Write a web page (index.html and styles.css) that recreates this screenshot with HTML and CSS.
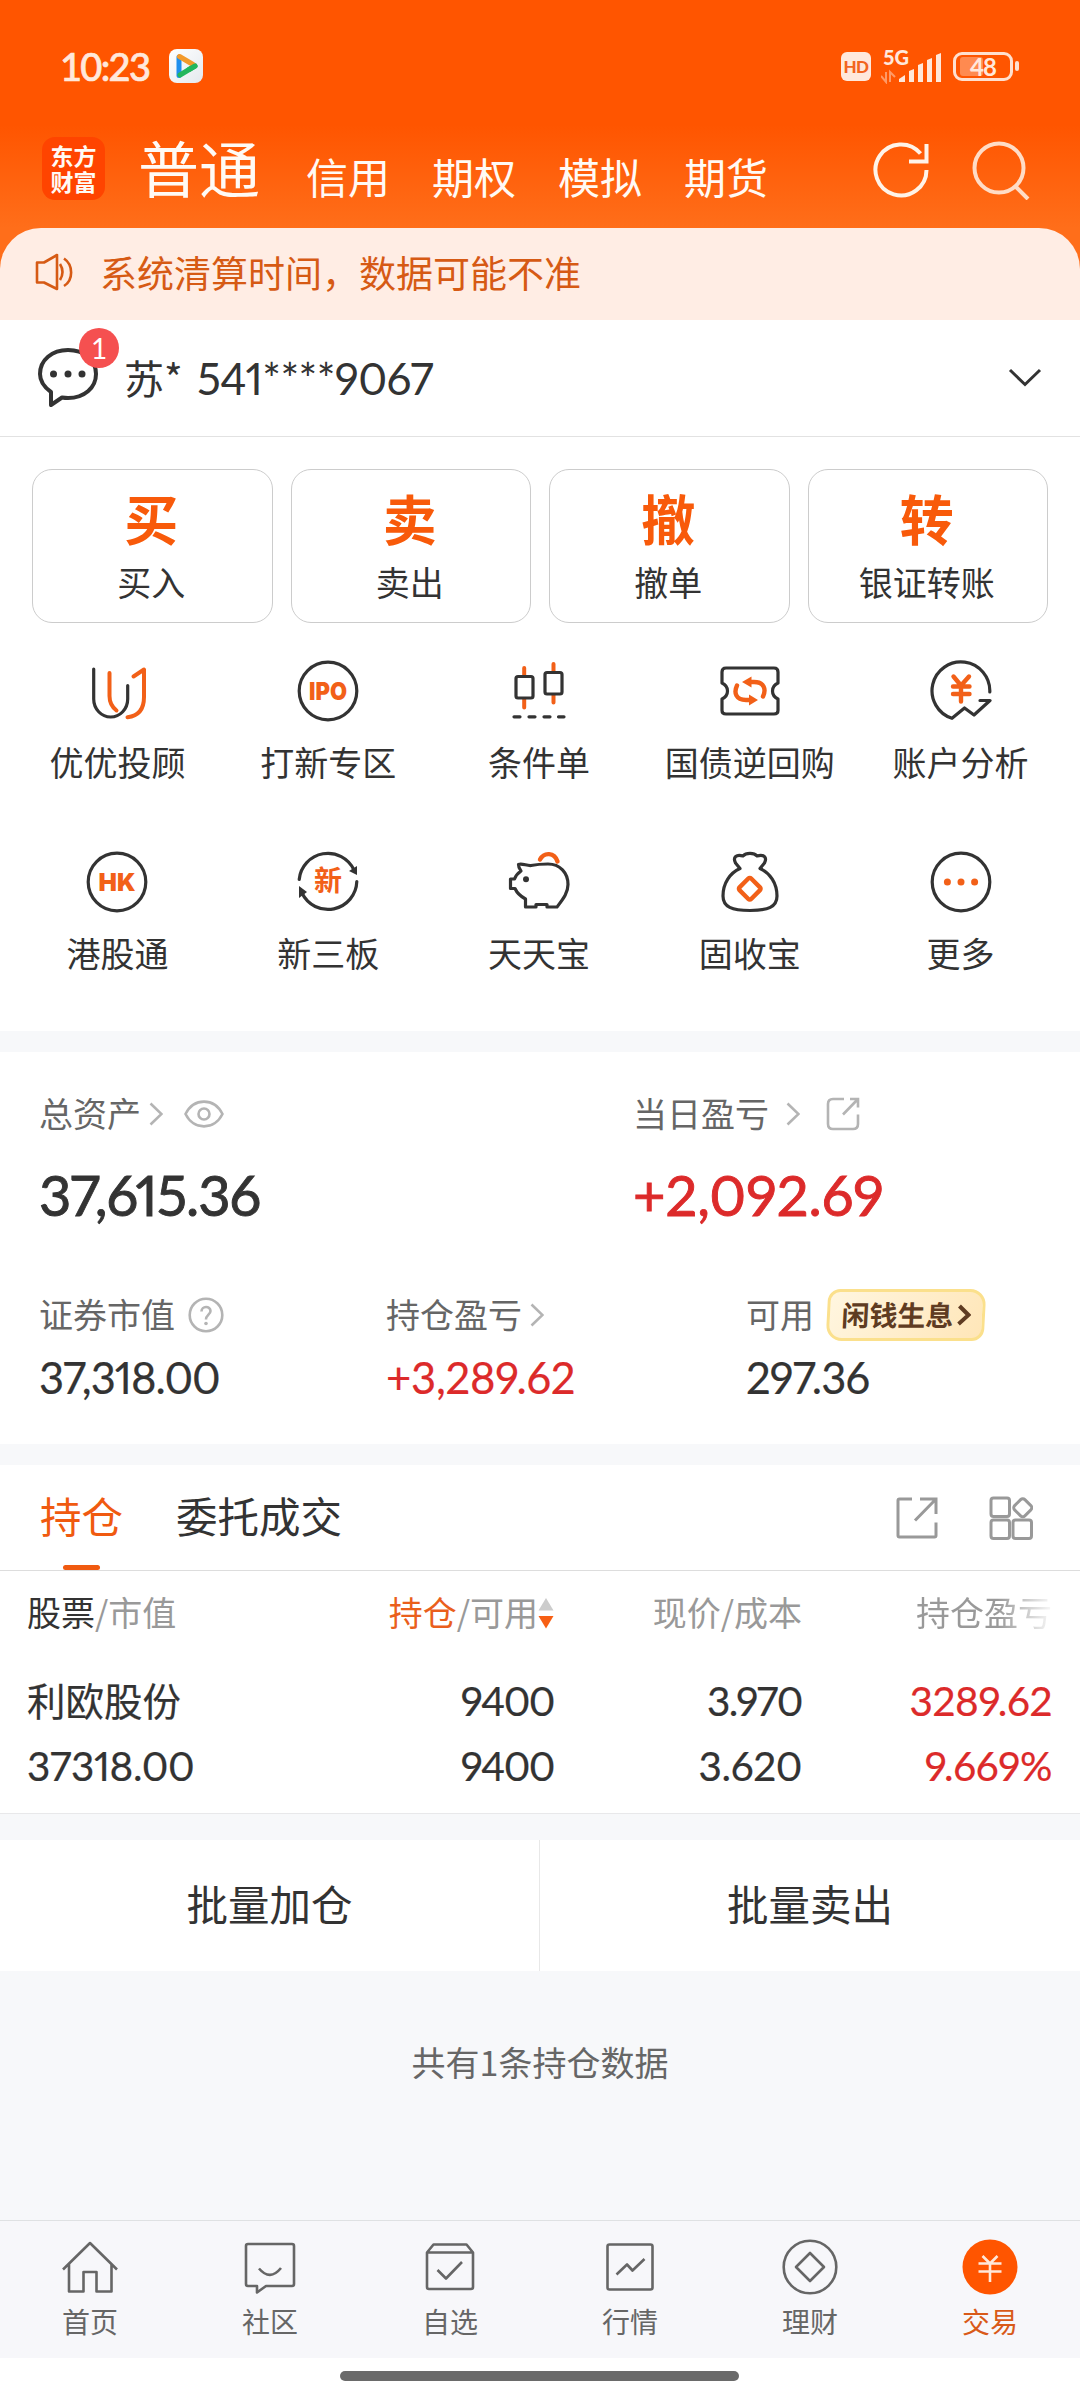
FILE: index.html
```html
<!DOCTYPE html>
<html lang="zh-CN">
<head>
<meta charset="utf-8">
<title>交易</title>
<link rel="stylesheet" href="styles.css">
</head>
<body>
<header class="top">
  <div class="status">
    <span class="time">10:23</span>
    <svg class="player" width="34" height="34" viewBox="0 0 34 34"><defs><linearGradient id="pg" x1="0" y1="0" x2="1" y2="1"><stop offset="0" stop-color="#fff"/><stop offset="1" stop-color="#e4e9ee"/></linearGradient></defs><rect width="34" height="34" rx="8" fill="url(#pg)"/><path d="M10 8V26.500" stroke="#1e8fee" stroke-width="5" stroke-linecap="round"/><path d="M11 26L26 17" stroke="#23b65c" stroke-width="5" stroke-linecap="round"/><path d="M10.500 7.500L24 15.500" stroke="#f39a2b" stroke-width="5" stroke-linecap="round"/><path d="M20 20.500L26 17" stroke="#23b65c" stroke-width="5" stroke-linecap="round"/></svg>
    <span class="hd">HD</span>
    <svg class="signal" width="60" height="36" viewBox="0 -2 60 36"><text x="2" y="14.500" class="fiveg">5G</text><g fill="#ffe8db"><path d="M18 32v-3l6-4v7zM28 32V21l5-2v13zM37 32V15l5-2v19zM46 32V10l5-2v24zM55 32V5l5-2v29z"/></g><path d="M5 22v10l-5-6M9 32V22l5 5" fill="none" stroke="#ff9a66" stroke-width="2"/></svg>
    <span class="battery"><span class="charge"></span><span class="pct">48</span></span><span class="nub"></span>
  </div>
  <nav class="markets">
    <span class="logo"><span>东方</span><span>财富</span></span>
    <span class="current">普通</span>
    <span>信用</span><span>期权</span><span>模拟</span><span>期货</span>
    <svg class="refresh" width="60" height="60" viewBox="0 0 60 60"><path d="M54.500 30A25.500 25.500 0 1 1 48.500 13.500" /><path d="M54.500 4V21.500H37"/></svg>
    <svg class="search" width="60" height="60" viewBox="0 0 60 60"><circle cx="27" cy="28" r="24.500"/><path d="M43 46L56 59"/></svg>
  </nav>
</header>
<main>
  <section class="notice">
    <svg width="38" height="40" viewBox="0 0 38 40"><path d="M2 10.500H9L22 3V37L9 30.500H2ZM22 3V37M25 12Q30 20 25 28M29 6.500C38.500 13 38.500 28 29 34"/></svg>
    <span>系统清算时间，数据可能不准</span>
  </section>
  <section class="account">
    <span class="chat"><svg width="60" height="62" viewBox="0 0 60 62"><path d="M13 45C6 40 2 34 2 27 2 13 14 3 30 3S58 13 58 27 46 51 30 51Q27 51 24 50.500L13 58Z"/><g class="dots"><circle cx="15.500" cy="27" r="3.500"/><circle cx="30" cy="27" r="3.500"/><circle cx="44" cy="27" r="3.500"/></g></svg><b>1</b></span>
    <span class="name">苏*</span><span class="num acct">541****9067</span>
    <svg class="down" width="34" height="20" viewBox="0 0 34 20"><path d="M2 2L17 16.500L32 2"/></svg>
  </section>
  <section class="actions">
    <div class="act"><b>买</b><span>买入</span></div>
    <div class="act"><b>卖</b><span>卖出</span></div>
    <div class="act"><b>撤</b><span>撤单</span></div>
    <div class="act"><b>转</b><span>银证转账</span></div>
  </section>
  <section class="tools">
    <div class="tool"><svg viewBox="0 0 64 64"><path d="M8.700 10V40A17 18 0 0 0 42.700 40V26.500"/><g class="o"><path d="M24.500 14V37C24.500 44 27 48 31.500 51.500M48.500 17.500L59 10.500V38C59 51 53 57 42.500 58.200"/></g></svg><span>优优投顾</span></div>
    <div class="tool"><svg viewBox="0 0 64 64"><circle cx="32" cy="32" r="28.800"/><text x="32" y="41" textLength="38" lengthAdjust="spacingAndGlyphs">IPO</text></svg><span>打新专区</span></div>
    <div class="tool"><svg viewBox="0 0 64 64"><g class="o"><path d="M17.200 9V17M17.200 40V48.500M46.500 5V12M46.500 36V43.500"/></g><rect x="9" y="17.500" width="17" height="21.500" rx="2"/><rect x="38" y="13.500" width="17" height="21.500" rx="2"/><path d="M7 57.800H13M22 57.800H28M37 57.800H43M51.500 57.800H57"/></svg><span>条件单</span></div>
    <div class="tool"><svg viewBox="0 0 64 64"><path d="M8 9H56Q60 9 60 13V24Q54.500 26.500 54.500 32T60 40V51.500Q60 55 56 55H8Q4 55 4 51.500V40Q9.500 37.500 9.500 32T4 24V13Q4 9 8 9Z"/><g class="o thick"><path d="M45 37.500C48.500 30 46 23 36 23H30M19 26.500C15.500 34 18 41 28 41H34"/></g><path class="of" d="M24 23L33.500 17.500V28.500ZM40 41L31 35.500V46.500Z"/></svg><span>国债逆回购</span></div>
    <div class="tool"><svg viewBox="0 0 64 64"><path d="M60.800 33A28.900 28.900 0 1 0 23 59.300L35.500 49L45 56L61 41.500H51"/><g class="o thick"><path d="M24.500 17.500L32 26.500L40 17.500M32 27V42.500M24 27.500H40.500M24 35H40.500"/></g></svg><span>账户分析</span></div>
    <div class="tool"><svg viewBox="0 0 64 64"><circle cx="32" cy="32" r="28.800"/><text x="32" y="41" textLength="37" lengthAdjust="spacingAndGlyphs">HK</text></svg><span>港股通</span></div>
    <div class="tool"><svg viewBox="0 0 64 64"><path d="M3.200 29.500A28.800 28.800 0 0 1 58 20M60.800 31.500A28.800 28.800 0 0 1 6 43"/><path class="df" d="M61 16V25L53 21ZM3 48V36L11 42Z"/><text x="32" y="41" class="cn">新</text></svg><span>新三板</span></div>
    <div class="tool"><svg viewBox="0 0 64 64"><path d="M11.500 14.500C15 13 20 16 24 15.500C29 14.500 35 14 41 14C53 14 61 23 61 34.500C61 43 56 49 50 57H40V54.500H29V57H18.500V49C13 46 10 43 8 38.500H3.500V29H7.500C8.500 26 10.500 23.500 14 21Q11.500 18 11.500 14.500Z"/><circle class="df" cx="19" cy="29.300" r="3"/><g class="o thick"><path d="M33 9.500C37 2 47.500 2 50.500 11.500"/></g></svg><span>天天宝</span></div>
    <div class="tool"><svg viewBox="0 0 64 64"><path d="M22 18.500L17.500 13C14.500 7 18.500 4 25 6C28 2.500 36 2.500 39 6C45.500 4 49.500 7 46.500 13L42 18.500C52 23 59 33 59 46C59 57 50 60.500 32 60.500S5 57 5 46C5 33 12 23 22 18.500Z"/><g class="o thick"><rect x="23.500" y="30.500" width="16.500" height="16.500" rx="2" transform="rotate(45 31.750 38.750)"/></g></svg><span>固收宝</span></div>
    <div class="tool"><svg viewBox="0 0 64 64"><circle cx="32" cy="32" r="28.800"/><g class="dots"><circle cx="18.400" cy="32" r="3.500"/><circle cx="32" cy="32" r="3.500"/><circle cx="45.600" cy="32" r="3.500"/></g></svg><span>更多</span></div>
  </section>
  <section class="assets">
    <div class="main-row">
      <div class="cell"><div class="label">总资产<svg class="gt" viewBox="0 0 14 24"><path d="M1.500 1.500L12.500 12L1.500 22.500"/></svg><svg class="eye" viewBox="0 0 40 28"><path d="M1.500 14C10 -2.500 30 -2.500 38.500 14C30 30.500 10 30.500 1.500 14Z"/><circle cx="20" cy="14" r="5.500"/></svg></div><div class="num big total">37,615.36</div></div>
      <div class="cell"><div class="label">当日盈亏<svg class="gt far" viewBox="0 0 14 24"><path d="M1.500 1.500L12.500 12L1.500 22.500"/></svg><svg class="share" viewBox="0 0 34 34"><path d="M18 2H7Q2 2 2 7V27Q2 32 7 32H27Q32 32 32 27V17.500M24 2H32V10.500M32 2L17 17.500"/></svg></div><div class="num big red day">+2,092.69</div></div>
    </div>
    <div class="sub-row">
      <div class="cell"><div class="label">证券市值<svg class="help" viewBox="0 0 36 36"><circle cx="18" cy="18" r="16.300"/><path d="M13.500 14.500C13.500 8.500 22.500 8.500 22.500 14C22.500 17.500 18 18 18 22.500"/><circle class="pt" cx="18" cy="26.500" r="1.800"/></svg></div><div class="num mid mv">37,318.00</div></div>
      <div class="cell"><div class="label">持仓盈亏<svg class="gt" viewBox="0 0 14 24"><path d="M1.500 1.500L12.500 12L1.500 22.500"/></svg></div><div class="num mid red pl">+3,289.62</div></div>
      <div class="cell"><div class="label">可用<span class="promo"><span>闲钱生息</span><svg viewBox="0 0 14 22"><path d="M2 2L11.500 11L2 20"/></svg></span></div><div class="num mid av">297.36</div></div>
    </div>
  </section>
  <section class="tabs">
    <span class="tab on">持仓</span><span class="tab">委托成交</span>
    <svg class="export" viewBox="0 0 44 44"><path d="M17 3H4.500Q3 3 3 4.500V39.500Q3 41 4.500 41H39.500Q41 41 41 39.500V26.500M25 3H41V18M41 3L20 24.500"/></svg>
    <svg class="blocks" viewBox="0 0 44 44"><rect x="2" y="2" width="18.500" height="18.500" rx="2.500"/><rect x="2" y="24" width="18.500" height="18.500" rx="2.500"/><rect x="24" y="24" width="18.500" height="18.500" rx="2.500"/><rect x="26.500" y="4.500" width="14.500" height="14.500" rx="3" transform="rotate(45 33.750 11.750)"/></svg>
  </section>
  <section class="table">
    <div class="tr head"><span><em>股票</em>/市值</span><span><i>持仓</i>/可用<svg class="sort" viewBox="0 0 16 32"><path d="M8 1L15.500 13.500H0.500Z" fill="#ccc"/><path d="M8 31.500L15.500 19H0.500Z" fill="#f75f14"/></svg></span><span>现价/成本</span><span class="fade">持仓盈亏</span></div>
    <div class="tr"><span class="stock">利欧股份</span><span class="num tight">9400</span><span class="num tight">3.970</span><span class="num red">3289.62</span></div>
    <div class="tr"><span class="num value">37318.00</span><span class="num tight">9400</span><span class="num">3.620</span><span class="num red">9.669%</span></div>
  </section>
  <section class="batch"><span>批量加仓</span><span>批量卖出</span></section>
  <p class="count">共有1条持仓数据</p>
</main>
<nav class="dock">
  <div><svg viewBox="0 0 64 60"><path d="M5 33.500L32 7L59 33.500M11 28V55.500H25.500V36H38.500V55.500H53.500V28"/></svg><span>首页</span></div>
  <div><svg viewBox="0 0 64 60"><path d="M10 8H54Q56 8 56 10V48Q56 50 54 50H28L19 56.500V50H10Q8 50 8 48V10Q8 8 10 8ZM21 32.500Q32 45.500 43 32"/></svg><span>社区</span></div>
  <div><svg viewBox="0 0 64 60"><path d="M9 16.500L15.500 8.500H48.500L55 16.500V51Q55 53 53 53H11Q9 53 9 51ZM9 16.500H55M19.500 34L28 42.500L44 26"/></svg><span>自选</span></div>
  <div><svg viewBox="0 0 64 60"><rect x="9.500" y="8.500" width="45" height="45" rx="2"/><path d="M18.500 38.500L29 28.500L34.500 34.500L46.500 23"/></svg><span>行情</span></div>
  <div><svg viewBox="0 0 64 60"><circle cx="32" cy="31" r="26.300"/><path d="M32 17L46 31L32 45L18 31Z"/></svg><span>理财</span></div>
  <div class="on"><svg viewBox="0 0 64 60"><circle cx="32" cy="31" r="27.500"/><path d="M24.500 20L32 27.500L39.500 20M20.500 27.500H43.500M20.500 35.500H43.500M32 27.500V46"/></svg><span>交易</span></div>
</nav>
<div class="gesture"><span></span></div>
</body>
</html>
```
FILE: styles.css
```css
* { box-sizing: border-box; }
body { margin: 0; width: 1080px; height: 2400px; display: flex; flex-direction: column; background: #fff; color: #333; font: 34px/1 "Noto Sans CJK SC", sans-serif; white-space: nowrap; overflow: hidden; }
svg { display: block; flex: none; fill: none; }
.num { font-family: Lato, "Noto Sans CJK SC", sans-serif; font-variant-numeric: proportional-nums; }
.red { color: #dc2a2a; }

.top { height: 228px; background: linear-gradient(#ff5500 125px, #ff6e1a 228px); flex: none; }
.status { height: 132px; padding: 0 60px; display: flex; align-items: center; }
.time { font: 500 38px/1 Lato, sans-serif; letter-spacing: -1.700px; -webkit-text-stroke: 0.700px; color: #ffe8db; width: 109px; }
.hd { width: 30px; height: 29px; margin-left: auto; border-radius: 6px; background: #ffe8db; color: #f2641e; font: 900 17px/29px Lato, sans-serif; letter-spacing: -0.500px; text-align: center; }
.signal { margin: 0 12px 0 10px; }
.fiveg { font: 900 20px Lato, sans-serif; fill: #ffe8db; }
.battery { position: relative; width: 60px; height: 29px; border: 3px solid #ffe0cf; border-radius: 9px; text-align: center; }
.charge { position: absolute; left: 4px; top: 2px; width: 23px; height: 19px; border-radius: 3px; background: #ff8a50; }
.pct { position: relative; font: 700 24px/23px Lato, sans-serif; letter-spacing: -1px; color: #ffe8db; display: block; }
.nub { width: 4px; height: 10px; margin: 0 1px 0 2px; border-radius: 2px; background: #ffe0cf; }
.markets { height: 96px; padding: 0 48px 0 42px; display: flex; align-items: flex-start; color: #fffaf5; }
.markets > span { font-size: 42px; line-height: 42px; margin-right: 42px; padding-top: 23px; }
.markets > .logo { width: 63px; height: 63px; margin: 5px 33px 0 0; padding: 7px 0 0; border-radius: 13px; background: #ff4400; display: flex; flex-direction: column; align-items: center; font-size: 23px; font-weight: 700; line-height: 23px; gap: 3px; }
.markets > .current { font-size: 61px; line-height: 62px; margin-right: 46px; padding-top: 4px; }
.refresh, .search { stroke: #fff3e8; stroke-width: 4; margin-top: 8px; }
.refresh { margin-left: auto; }
.search { margin-left: 40px; stroke: #ffdcc6; }

main { flex: 1; background: linear-gradient(#ff6e1a 92px, #f7f8fa 92px); }
.notice { height: 92px; display: flex; align-items: center; gap: 27px; padding: 0 0 4px 35px; border-radius: 41px 41px 0 0; background: #ffede4; color: #d65a14; font-size: 37px; }
.notice svg { stroke: #d65a14; stroke-width: 2.600; stroke-linejoin: round; }
.account { height: 117px; display: flex; align-items: center; padding: 0 38px; background: #fff; border-bottom: 1px solid #e2e2e2; }
.chat { position: relative; stroke: #333; stroke-width: 4; stroke-linejoin: round; }
.dots { fill: #333; stroke: none; }
.chat b { position: absolute; left: 41px; top: -19px; width: 40px; height: 40px; border-radius: 50%; background: #f55050; color: #fff; font: 400 28px/40px Lato, sans-serif; text-align: center; }
.name { margin: -2px 0 0 26px; font-size: 40px; width: 73px; }
.acct { font-size: 44px; letter-spacing: -0.600px; }
.down { margin-left: auto; stroke: #333; stroke-width: 3; }
.actions { height: 187px; background: #fff; padding: 32px 32px 0; display: grid; grid-template-columns: repeat(4, 1fr); gap: 18px; }
.act { height: 154px; padding-right: 2px; border: 1px solid #ccc; border-radius: 20px; display: flex; flex-direction: column; align-items: center; }
.act b { font-size: 54px; line-height: 54px; margin: 21px 0 20px; color: #f85a0a; }
.tools { height: 407px; background: #fff; padding: 35px 14px 0 12px; display: grid; grid-template-columns: repeat(5, 1fr); grid-auto-rows: 191px; }
.tool { display: flex; flex-direction: column; align-items: center; gap: 22px; }
.tool svg { width: 64px; height: 64px; stroke: #333; stroke-width: 3.200; stroke-linejoin: round; stroke-linecap: round; }
.tool .o { stroke: #f26018; stroke-width: 4; }
.tool .thick { stroke-width: 4.400; }
.tool .of, .tool .dots { fill: #f26018; stroke: none; }
.tool .df { fill: #333; stroke: none; }
.tool text { font: 900 25px Inter, sans-serif; fill: #f26018; stroke: none; text-anchor: middle; }
.tool .cn { font: 700 28px "Noto Sans CJK SC", sans-serif; }

.assets { height: 392px; margin-top: 21px; background: #fff; padding: 39px 41px 0 39px; }
.main-row, .sub-row { display: grid; }
.main-row { grid-template-columns: 594px 1fr; height: 201px; }
.sub-row { grid-template-columns: 347px 360px 1fr; }
.label { display: flex; align-items: center; height: 44px; color: #666; font-size: 34px; }
.label svg { stroke: #b4b4b4; stroke-width: 2.600; margin-top: 2px; }
.gt { width: 14px; height: 24px; margin-left: 8px; }
.gt.far { margin-left: 17px; }
.eye { width: 40px; height: 28px; margin-left: 21px; }
.share { width: 34px; height: 34px; margin-left: 26px; }
.help { width: 36px; height: 36px; margin-left: 13px; }
.help .pt { fill: #b4b4b4; stroke: none; }
.big { font-size: 56px; line-height: 56px; margin-top: 32px; -webkit-text-stroke: 0.900px; }
.total { letter-spacing: -1px; }
.mid { font-size: 43.500px; line-height: 44px; margin-top: 19px; -webkit-text-stroke: 0.200px; }
.mv { letter-spacing: -1px; }
.pl { letter-spacing: -0.200px; }
.av { letter-spacing: -0.800px; }
.promo { width: 158px; height: 52px; margin: 2px 0 0 13px; display: flex; align-items: center; justify-content: center; gap: 3px; border: 3px solid #fbe08c; border-radius: 12px 16px 12px 16px; background: linear-gradient(120deg, #fff6e0, #ffe6b8); color: #5f3c22; font-size: 28px; font-weight: 700; transform: skewX(-3deg); }
.promo > span { margin-top: -2px; }
.promo svg { width: 14px; height: 22px; margin: 0; stroke: #5f3c22; stroke-width: 4; }

.tabs { height: 106px; margin-top: 21px; background: #fff; border-bottom: 1px solid #ddd; display: flex; padding: 0 47px 0 40px; font-size: 41.500px; align-items: center; }
.tab { height: 105px; line-height: 101px; margin-right: 53px; }
.tab.on { color: #f05a10; display: flex; flex-direction: column; align-items: center; }
.tab.on::after { content: ""; width: 37px; height: 5px; margin-top: -1px; border-radius: 3px; background: #f05a10; flex: none; }
.tabs svg { width: 44px; height: 44px; stroke: #999; stroke-width: 3; }
.export { margin-left: auto; }
.blocks { margin-left: 50px; }
.table { height: 243px; background: #fff; border-bottom: 1px solid #e8e8ea; padding: 8px 27px 0; }
.tr { display: grid; grid-template-columns: 276px 251px 248px 250px; height: 65px; align-items: center; font-size: 40.500px; -webkit-text-stroke: 0.200px; }
.tr > :not(:first-child) { justify-self: end; }
.tr.head { height: 65px; margin-bottom: 24px; font-size: 34px; color: #999; -webkit-text-stroke: 0; }
.tr.head > span { display: flex; align-items: center; }
.tr em { font-style: normal; color: #333; }
.tr i { font-style: normal; color: #ea5f1c; }
.tr .num { padding-top: 2px; letter-spacing: -0.400px; }
.tr .tight { letter-spacing: -1.500px; }
.sort { width: 16px; height: 32px; margin-top: 3px; }
.stock { font-size: 38.500px; margin-top: -2px; }
.tr .fade { color: transparent; background: linear-gradient(90deg, #999 60%, #f4f4f4 98%); background-clip: text; -webkit-background-clip: text; }
.batch { height: 131px; margin-top: 26px; background: #fff; display: grid; grid-template-columns: 539px 1fr; }
.batch span { text-align: center; line-height: 127px; font-size: 41.500px; }
.batch span + span { border-left: 1px solid #e8e8e8; }
.count { margin: 74px 0 0; text-align: center; color: #666; font-size: 34px; }
.dock { height: 138px; flex: none; background: #f7f7fa; border-top: 1px solid #dfe1e3; display: grid; grid-template-columns: repeat(6, 1fr); color: #666; font-size: 28px; }
.dock div { display: flex; flex-direction: column; align-items: center; padding-top: 15px; gap: 11px; }
.dock svg { width: 64px; height: 60px; stroke: #666; stroke-width: 2.600; stroke-linejoin: round; }
.dock .on { color: #d95a18; }
.dock .on circle { fill: #ff5500; stroke: none; }
.dock .on path { stroke: #ffe8da; }
.gesture { height: 42px; flex: none; padding: 13px 0 0 340px; background: #fff; }
.gesture span { display: block; width: 399px; height: 10px; border-radius: 5px; background: #6a6a6a; }
```
